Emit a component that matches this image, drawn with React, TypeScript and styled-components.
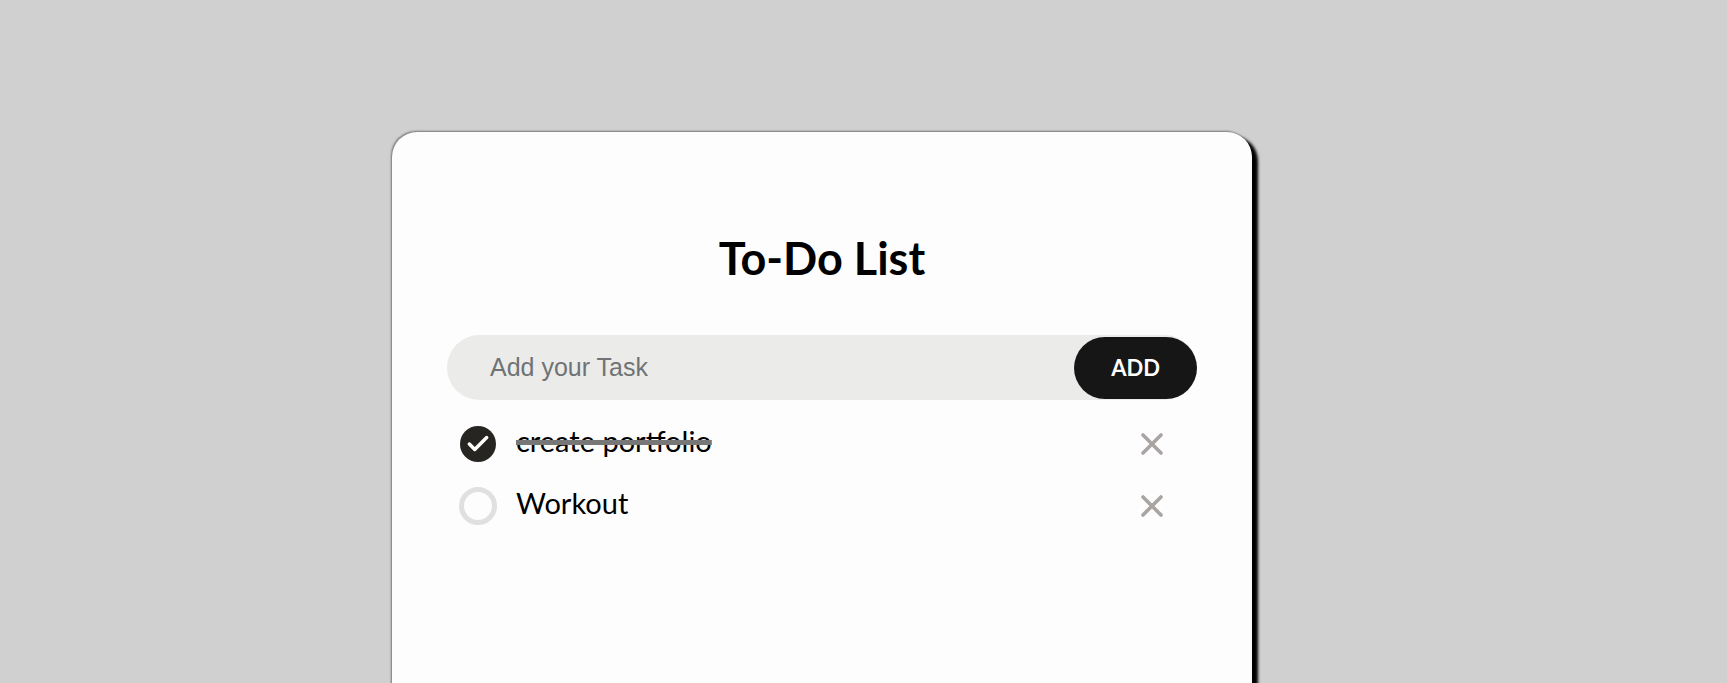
import React from "react";
import styled, { createGlobalStyle } from "styled-components";
import { Check, X } from "lucide-react";

const Global = createGlobalStyle`
  html, body { margin: 0; padding: 0; height: 683px; overflow: hidden; background: #d0d0d0; }
  * { box-sizing: border-box; }
`;

const Page = styled.div`
  height: 683px;
  overflow: hidden;
  padding: 132px 0 0 392px;
  font-family: Lato, sans-serif;
`;

const Card = styled.section`
  width: 860px;
  height: 700px;
  padding: 97px 55px 0;
  background: #fdfdfd;
  border-radius: 25px;
  box-shadow: 6px 4px 3px #000, -1px -1px 2px #777;
`;

const Title = styled.h1`
  margin: 0 0 48px;
  text-align: center;
  font-size: 45px;
  line-height: 58px;
  font-weight: 700;
  color: #000;
`;

const InputBar = styled.div`
  display: flex;
  justify-content: space-between;
  height: 65px;
  width: 750px;
  padding-left: 43px;
  background: #ebebe9;
  border-radius: 33px;
`;

const Placeholder = styled.span`
  align-self: center;
  font-family: "Liberation Sans", Arial, sans-serif;
  font-size: 25px;
  color: #6f7375;
`;

const AddButton = styled.button`
  align-self: flex-end;
  width: 123px;
  height: 62px;
  margin-bottom: 1px;
  padding: 0 0 2px;
  border: 0;
  border-radius: 31px;
  background: #161616;
  color: #fff;
  font-family: Lato, sans-serif;
  font-size: 22px;
  font-weight: 700;
`;

const List = styled.ul`
  list-style: none;
  margin: 13px 0 0;
  padding: 0 0 0 12px;
`;

const Row = styled.li`
  display: flex;
  align-items: center;
  height: 62px;
`;

const Toggle = styled.span<{ $done: boolean }>`
  flex: none;
  display: flex;
  align-items: center;
  justify-content: center;
  width: ${(p) => (p.$done ? "36px" : "38px")};
  height: ${(p) => (p.$done ? "36px" : "38px")};
  margin: 0 ${(p) => (p.$done ? "20px" : "19px")} 0 ${(p) => (p.$done ? "1px" : "0")};
  border-radius: 50%;
  background: ${(p) => (p.$done ? "#262522" : "transparent")};
  border: ${(p) => (p.$done ? "0" : "5px solid #e0e0e0")};
  color: #fff;
`;

const Label = styled.span<{ $done: boolean }>`
  flex: 1;
  font-size: 29px;
  line-height: 36px;
  margin-top: -6px;
  color: #000;
  span {
    text-decoration: ${(p) => (p.$done ? "line-through" : "none")};
    text-decoration-color: #777;
    text-decoration-thickness: 5px;
  }
`;

const Remove = styled.span`
  display: flex;
  margin-right: 27px;
  color: #a8a5a3;
`;

const tasks = [
  { text: "create portfolio", done: true },
  { text: "Workout", done: false },
];

export default function App() {
  return (
    <Page>
      <Global />
      <Card>
        <Title>To-Do List</Title>
        <InputBar>
          <Placeholder>Add your Task</Placeholder>
          <AddButton>ADD</AddButton>
        </InputBar>
        <List>
          {tasks.map((t) => (
            <Row key={t.text}>
              <Toggle $done={t.done}>{t.done && <Check size={26} strokeWidth={3.2} />}</Toggle>
              <Label $done={t.done}><span>{t.text}</span></Label>
              <Remove><X size={36} strokeWidth={2.4} /></Remove>
            </Row>
          ))}
        </List>
      </Card>
    </Page>
  );
}
